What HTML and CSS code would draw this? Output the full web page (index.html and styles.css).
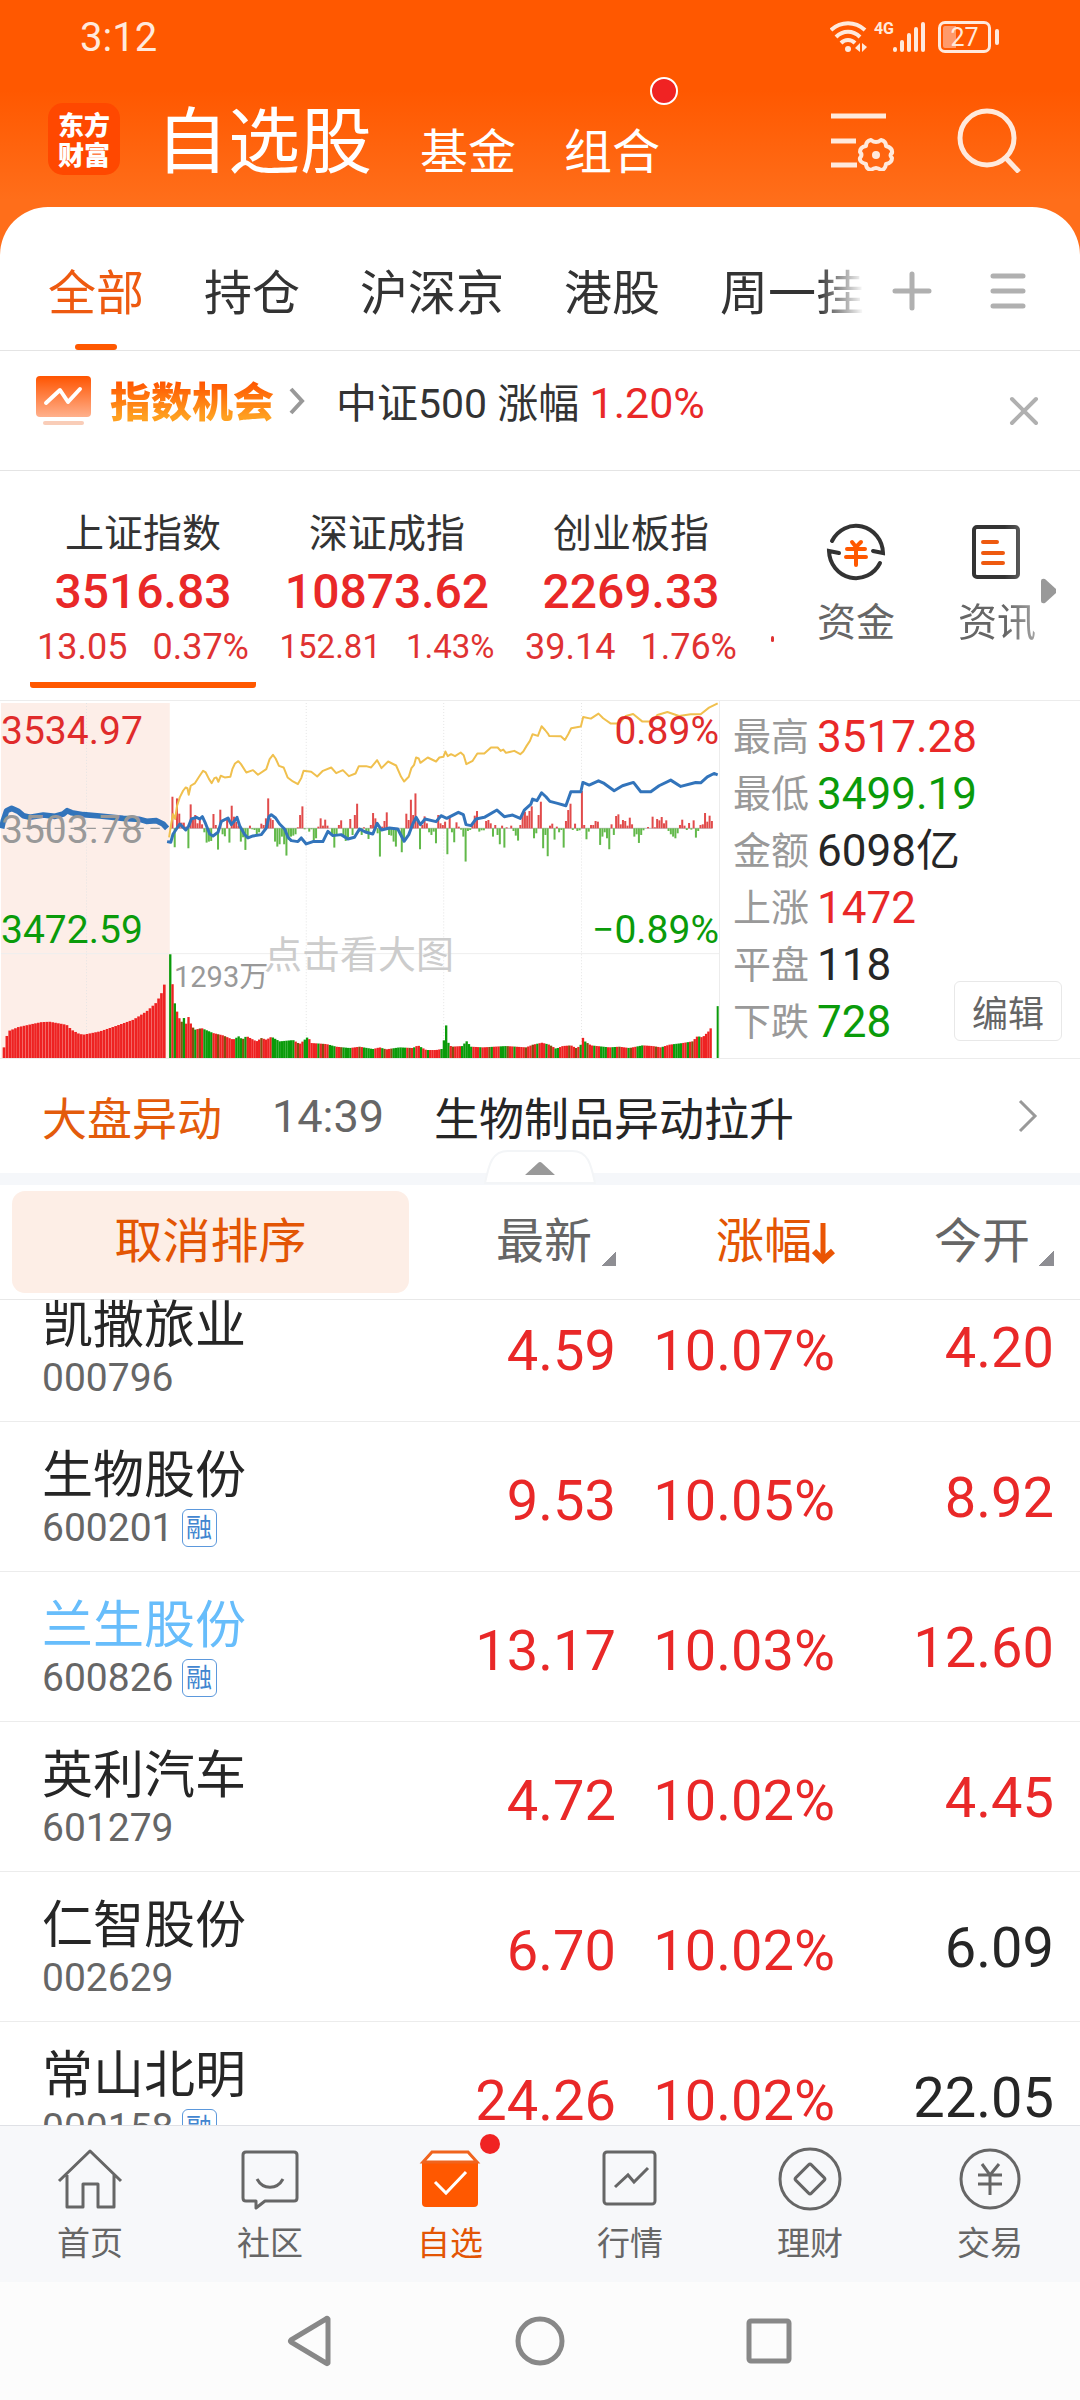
FILE: index.html
```html
<!DOCTYPE html>
<html lang="zh-CN">
<head>
    <meta charset="UTF-8" />
    <meta name="viewport" content="width=device-width, initial-scale=1.0" />
    <title>自选股</title>
    <link rel="stylesheet" href="styles.css">
</head>
<body>
<div class="app">
    <header class="header">
        <div class="status-bar">
            <span class="clock">3:12</span>
            <div class="status-icons">
                <svg width="38" height="32" viewBox="0 0 38 32" fill="none" stroke="#ffe9dc" stroke-width="4">
                    <path d="M1 9C11 0 25 0 35 9M6 16c7-7 17-7 24 0M11 22c4-4 10-4 14 0"/>
                    <circle cx="18" cy="28" r="3" fill="#ffe9dc" stroke="none"/>
                    <path d="M30 22v9l-5-4zM32 22v9l5-5z" fill="#ffe9dc" stroke="none"/>
                </svg>
                <span class="net">4G</span>
                <svg width="34" height="32" viewBox="0 0 34 32" fill="none" stroke="#ffe9dc" stroke-width="4" stroke-linecap="round">
                    <path d="M3 28v1M10 21v8M17 14v15M24 8v21M31 3v26"/>
                </svg>
                <span class="battery">27</span>
            </div>
        </div>
        <nav class="top-nav">
            <span class="logo">东方<br>财富</span>
            <a href="#" class="top-link current">自选股</a>
            <a href="#" class="top-link">基金</a>
            <a href="#" class="top-link has-dot">组合</a>
            <button class="icon-btn push" aria-label="设置">
                <svg width="66" height="62" viewBox="0 0 66 62" fill="none" stroke="#ffe9dc" stroke-width="5">
                    <path d="M0 7h55M0 32h25M0 56h26"/>
                    <path d="M40 31Q45 35 50 31Q55 32 55 37Q62 39 61 44Q58 46 61 49Q61 54 55 55Q54 61 50 61Q45 57 40 61Q35 60 35 55Q28 53 29 49Q32 46 29 43Q29 38 35 37Q35 32 40 31Z" stroke-width="4" stroke-linejoin="round"/>
                    <circle cx="45" cy="46" r="4" fill="#ffe9dc" stroke="none"/>
                </svg>
            </button>
            <button class="icon-btn" aria-label="搜索">
                <svg width="64" height="66" viewBox="0 0 64 66" fill="none" stroke="#ffe9dc" stroke-width="5">
                    <circle cx="30" cy="31" r="27"/>
                    <path d="M48 50l14 15"/>
                </svg>
            </button>
        </nav>
    </header>

    <main class="sheet">
        <div class="group-tabs">
            <div class="tab-scroll">
                <button class="tab active">全部</button>
                <button class="tab">持仓</button>
                <button class="tab">沪深京</button>
                <button class="tab">港股</button>
                <button class="tab">周一挂</button>
            </div>
            <button class="icon-btn" aria-label="添加">
                <svg width="40" height="40" viewBox="0 0 40 40" stroke="#b0b0b0" stroke-width="5" stroke-linecap="round">
                    <path d="M3 20h34M20 3v34"/>
                </svg>
            </button>
            <button class="icon-btn" aria-label="分组管理">
                <svg width="36" height="36" viewBox="0 0 36 36" stroke="#b0b0b0" stroke-width="5" stroke-linecap="round">
                    <path d="M3 3h30M3 18h30M3 33h30"/>
                </svg>
            </button>
        </div>

        <div class="banner">
            <svg width="55" height="50" viewBox="0 0 55 50">
                <defs>
                    <linearGradient id="bannerIcon" x1="0" y1="0" x2="0" y2="1">
                        <stop offset="0" stop-color="#ff5400"/>
                        <stop offset="1" stop-color="#ffb08c"/>
                    </linearGradient>
                </defs>
                <rect width="55" height="41" rx="4" fill="url(#bannerIcon)"/>
                <rect x="7" y="45" width="41" height="4" rx="2" fill="#f9cdb8"/>
                <path d="M10 27l14-13 8 12 12-13" fill="none" stroke="#fff" stroke-width="4" stroke-linecap="round" stroke-linejoin="round"/>
            </svg>
            <strong class="banner-title">指数机会</strong>
            <svg width="16" height="28" viewBox="0 0 16 28" fill="none" stroke="#999" stroke-width="4">
                <path d="M2 2l11 12L2 26"/>
            </svg>
            <p class="banner-text">中证500 涨幅 <span class="up">1.20%</span></p>
            <button class="icon-btn push" aria-label="关闭">
                <svg width="30" height="30" viewBox="0 0 30 30" stroke="#b0b0b0" stroke-width="4" stroke-linecap="round">
                    <path d="M3 3l24 24M27 3L3 27"/>
                </svg>
            </button>
        </div>

        <section class="indices">
            <div class="index-list">
                <div class="index active">
                    <h2>上证指数</h2>
                    <b>3516.83</b>
                    <p><span>13.05</span><span>0.37%</span></p>
                </div>
                <div class="index compact">
                    <h2>深证成指</h2>
                    <b>10873.62</b>
                    <p><span>152.81</span><span>1.43%</span></p>
                </div>
                <div class="index">
                    <h2>创业板指</h2>
                    <b>2269.33</b>
                    <p><span>39.14</span><span>1.76%</span></p>
                </div>
                <div class="index-more"></div>
            </div>
            <a href="#" class="shortcut">
                <svg width="60" height="64" viewBox="0 0 60 64" fill="none" stroke="#333" stroke-width="4" stroke-linecap="round">
                    <path d="M6 21A27 28 0 0 1 57 33L47 31"/>
                    <path d="M54 43A27 28 0 0 1 3 31L13 33"/>
                    <path d="M26 22l4 5 5-5M21 29h18M20 37h20M30 27v18" stroke="#ff5800"/>
                </svg>
                资金
            </a>
            <a href="#" class="shortcut fade">
                <svg width="60" height="64" viewBox="0 0 60 64" fill="none" stroke="#333" stroke-width="4" stroke-linecap="round">
                    <rect x="7" y="7" width="44" height="50" rx="3"/>
                    <path d="M16 22h14M16 33h20M16 43h20" stroke="#ee5a10"/>
                </svg>
                资讯
            </a>
            <svg class="more-arrow" width="15" height="26" viewBox="0 0 15 26" fill="#999">
                <path d="M0 3Q0 0 4 1L15 11V15L4 25Q0 26 0 23Z"/>
            </svg>
        </section>

        <section class="market">
            <div class="chart">
                <svg id="chart" class="chart-svg" viewBox="0 30 2160 1074" preserveAspectRatio="none" fill="none">
                    <rect x="3" y="36" width="507" height="1068" fill="#fdeee8"/>
                    <path d="M3 790H2160" stroke="#eee" stroke-width="3"/>
                    <path d="M260 36V1104M920 36V1104M1333 36V1104M1747 36V1104" stroke="#e4e4e4" stroke-width="3" stroke-dasharray="3 6"/>
                    <path d="M20 413H500" stroke="#999" stroke-width="4" stroke-dasharray="28 20"/>
                    <path d="M510 413H2140" stroke="#999" stroke-width="2"/>
                    <g id="bars"></g>
                    <polyline stroke="#f0c04e" stroke-width="6" stroke-linejoin="round" points="508,440 515,395 520,370 526,385 532,345 540,320 550,300 558,290 563,292 567,312 573,285 585,278 598,258 610,240 618,245 628,265 636,277 644,262 650,260 656,273 663,255 675,260 692,258 698,235 706,218 716,211 724,220 740,245 760,238 775,252 800,235 810,205 820,192 828,203 838,225 852,230 864,260 880,272 895,280 905,262 912,240 935,243 953,257 970,240 995,230 1010,247 1030,238 1048,256 1068,248 1078,226 1100,226 1115,230 1133,208 1146,232 1166,212 1190,224 1205,258 1214,272 1228,258 1236,232 1244,222 1250,200 1258,203 1263,216 1285,200 1310,212 1320,200 1332,198 1338,182 1345,196 1355,190 1367,196 1384,185 1393,193 1401,220 1420,210 1434,188 1455,188 1475,170 1495,170 1504,180 1512,176 1520,186 1545,180 1563,190 1572,182 1582,165 1592,150 1600,130 1616,135 1627,106 1638,118 1646,128 1650,135 1685,136 1697,147 1707,130 1716,112 1745,107 1752,78 1775,83 1798,68 1812,82 1835,98 1860,98 1880,75 1902,69 1930,92 1960,92 1975,72 2005,63 2040,75 2075,70 2105,70 2130,50 2156,37"/>
                    <polyline stroke="#3274bb" stroke-width="17" stroke-linejoin="round" points="5,413 10,390 20,360 35,353 55,362 70,375 90,380 130,373 165,377 190,370 202,360 215,366 250,372 300,376 370,383 420,386 440,392 470,390 490,400 502,413"/>
                    <polyline stroke="#3274bb" stroke-width="9" stroke-linejoin="round" points="502,453 513,455 520,430 530,415 540,400 550,410 558,418 566,408 575,385 590,380 600,385 608,378 618,400 630,430 640,436 655,425 665,392 685,382 695,402 705,390 712,380 720,405 735,432 745,442 760,436 785,432 800,412 808,378 815,372 828,382 840,400 855,415 865,440 875,450 895,453 905,442 920,460 940,453 970,453 985,422 1000,435 1025,432 1045,445 1065,440 1080,415 1100,425 1120,430 1133,398 1146,418 1170,412 1195,415 1214,452 1228,432 1240,400 1250,380 1263,402 1277,385 1310,393 1325,375 1342,383 1377,365 1392,372 1400,402 1415,405 1430,385 1455,380 1493,358 1515,378 1540,373 1563,383 1575,358 1595,340 1600,325 1613,330 1627,306 1640,318 1652,332 1675,338 1700,345 1715,303 1745,303 1751,275 1770,283 1798,270 1815,278 1845,300 1870,285 1903,275 1925,303 1955,303 1980,285 2015,268 2045,287 2090,275 2105,276 2125,258 2145,248 2156,252"/>
                </svg>
                <span class="mark high">3534.97</span>
                <span class="mark mid">3503.78</span>
                <span class="mark low">3472.59</span>
                <span class="mark high right">0.89%</span>
                <span class="mark low right">−0.89%</span>
                <span class="mark volume">1293万</span>
                <span class="mark hint">点击看大图</span>
            </div>
            <div class="stats">
                <dl>
                    <dt>最高</dt><dd class="up">3517.28</dd>
                    <dt>最低</dt><dd class="down">3499.19</dd>
                    <dt>金额</dt><dd>6098亿</dd>
                    <dt>上涨</dt><dd class="up">1472</dd>
                    <dt>平盘</dt><dd>118</dd>
                    <dt>下跌</dt><dd class="down">728</dd>
                </dl>
                <button class="edit-btn">编辑</button>
            </div>
        </section>

        <a href="#" class="alert">
            <span class="alert-tag">大盘异动</span>
            <time>14:39</time>
            <span class="alert-text">生物制品异动拉升</span>
            <svg class="push" width="20" height="34" viewBox="0 0 20 34" fill="none" stroke="#999" stroke-width="3">
                <path d="M2 2l15 15L2 32"/>
            </svg>
        </a>
        <div class="divider">
            <svg class="fold" width="112" height="34" viewBox="0 0 112 34">
                <path d="M1 33C5 14 8 1 24 1H88C104 1 107 14 111 33Z" fill="#fff" stroke="#f3f5f7" stroke-width="2"/>
                <path d="M41 25L54 13Q56 11 58 13L71 25Z" fill="#999"/>
            </svg>
        </div>

        <div class="list">
            <table>
                <colgroup>
                    <col><col class="c-last"><col class="c-rate"><col class="c-open">
                </colgroup>
                <thead>
                    <tr>
                        <th><button class="cancel-sort">取消排序</button></th>
                        <th><button class="sort">最新<i class="corner"></i></button></th>
                        <th><button class="sort on">涨幅<svg width="23" height="44" viewBox="0 0 23 44" fill="none" stroke="#ea5504" stroke-width="5"><path d="M11 1v36"/><path d="M2 29l9 9 10-9" stroke-width="6"/></svg></button></th>
                        <th><button class="sort">今开<i class="corner"></i></button></th>
                    </tr>
                </thead>
                <tbody>
                    <tr class="scrolled">
                        <td><div class="name">凯撒旅业</div><div class="code">000796</div></td>
                        <td class="up">4.59</td><td class="up">10.07%</td><td class="up">4.20</td>
                    </tr>
                    <tr>
                        <td><div class="name">生物股份</div><div class="code">600201<span class="badge">融</span></div></td>
                        <td class="up">9.53</td><td class="up">10.05%</td><td class="up">8.92</td>
                    </tr>
                    <tr>
                        <td><div class="name held">兰生股份</div><div class="code">600826<span class="badge">融</span></div></td>
                        <td class="up">13.17</td><td class="up">10.03%</td><td class="up">12.60</td>
                    </tr>
                    <tr>
                        <td><div class="name">英利汽车</div><div class="code">601279</div></td>
                        <td class="up">4.72</td><td class="up">10.02%</td><td class="up">4.45</td>
                    </tr>
                    <tr>
                        <td><div class="name">仁智股份</div><div class="code">002629</div></td>
                        <td class="up">6.70</td><td class="up">10.02%</td><td>6.09</td>
                    </tr>
                    <tr>
                        <td><div class="name">常山北明</div><div class="code">000158<span class="badge">融</span></div></td>
                        <td class="up">24.26</td><td class="up">10.02%</td><td>22.05</td>
                    </tr>
                </tbody>
            </table>
        </div>
    </main>

    <nav class="bottom-nav">
        <a href="#">
            <svg width="66" height="66" viewBox="0 0 66 66" fill="none" stroke="#666" stroke-width="3">
                <path d="M2 35L33 5l31 30M10 29v32h16V38h15v23h16V29" stroke-linejoin="round"/>
            </svg>
            首页
        </a>
        <a href="#">
            <svg width="66" height="66" viewBox="0 0 66 66" fill="none" stroke="#666" stroke-width="3" stroke-linejoin="round">
                <path d="M9 6h48q3 0 3 3v43q0 3-3 3H28l-9 7v-7H9q-3 0-3-3V9q0-3 3-3z"/>
                <path d="M20 33c6 11 20 11 26 0"/>
            </svg>
            社区
        </a>
        <a href="#" class="current has-dot">
            <svg width="66" height="66" viewBox="0 0 66 66" fill="none">
                <path d="M5 15h56v42q0 4-4 4H9q-4 0-4-4z" fill="#ff5800"/>
                <path d="M6 16L15 6h36l9 10z" fill="#fff" stroke="#f0641e" stroke-width="3"/>
                <path d="M18 36l11 11 20-21" stroke="#fff" stroke-width="3"/>
            </svg>
            自选
        </a>
        <a href="#">
            <svg width="66" height="66" viewBox="0 0 66 66" fill="none" stroke="#666" stroke-width="3">
                <rect x="7" y="6" width="51" height="52" rx="3"/>
                <path d="M18 41l13-12 6 7 14-14"/>
            </svg>
            行情
        </a>
        <a href="#">
            <svg width="66" height="66" viewBox="0 0 66 66" fill="none" stroke="#666" stroke-width="3">
                <circle cx="33" cy="33" r="30"/>
                <rect x="22" y="22" width="22" height="22" rx="2" transform="rotate(45 33 33)"/>
            </svg>
            理财
        </a>
        <a href="#">
            <svg width="66" height="66" viewBox="0 0 66 66" fill="none" stroke="#666" stroke-width="3">
                <circle cx="33" cy="33" r="29"/>
                <path d="M25 18l8 11 9-11M21 29h24M21 38h24M33 29v20"/>
            </svg>
            交易
        </a>
    </nav>

    <div class="system-bar">
        <button class="icon-btn" aria-label="返回">
            <svg width="50" height="54" viewBox="0 0 50 54" fill="none" stroke="#888" stroke-width="5" stroke-linejoin="round"><path d="M43 5v44q-1 1-2 0L6 28q-1-1 0-2L41 5q1-1 2 0z"/></svg>
        </button>
        <button class="icon-btn" aria-label="主页">
            <svg width="50" height="54" viewBox="0 0 50 54" fill="none" stroke="#888" stroke-width="5"><circle cx="25" cy="27" r="22"/></svg>
        </button>
        <button class="icon-btn" aria-label="最近任务">
            <svg width="50" height="54" viewBox="0 0 50 54" fill="none" stroke="#888" stroke-width="5"><rect x="4" y="7" width="40" height="40" rx="2"/></svg>
        </button>
    </div>
</div>
<script src="chart.js"></script>
</body>
</html>
```

FILE: styles.css
```css
* {
    box-sizing: border-box;
}

body {
    margin: 0;
    font-family: Roboto, "Noto Sans CJK SC", sans-serif;
    color: #262626;
    background-color: #fff;
}

h2, p, dl, dd {
    margin: 0;
    font-weight: normal;
}

a {
    color: inherit;
    text-decoration: none;
}

button {
    margin: 0;
    padding: 0;
    border: none;
    background: none;
    font: inherit;
    color: inherit;
    cursor: pointer;
}

svg {
    display: block;
    flex: none;
}

.app {
    display: flex;
    flex-direction: column;
    height: 100vh;
    overflow: hidden;
    background: linear-gradient(#ff5800 90px, #ff6e1a 200px);
}

.push {
    margin-left: auto;
}

.up {
    color: #e92828;
}

.down {
    color: #0a9b0a;
}

/* Header */
.status-bar {
    display: flex;
    justify-content: space-between;
    align-items: center;
    height: 74px;
    padding: 0 80px;
    color: #ffe9dc;
}

.clock {
    font-size: 40px;
}

.status-icons {
    display: flex;
    align-items: center;
    gap: 6px;
}

.net {
    align-self: flex-start;
    margin-right: -8px;
    font-size: 16px;
    font-weight: bold;
    line-height: 16px;
}

.battery {
    position: relative;
    width: 53px;
    height: 32px;
    margin: 0 9px 0 6px;
    padding: 2px;
    border: 3px solid #ffe9dc;
    border-radius: 7px;
    font-size: 25px;
    line-height: 23px;
    text-align: center;
    background: linear-gradient(90deg, #ff9a6b 13px, transparent 13px) content-box;
}

.battery::after {
    content: "";
    position: absolute;
    top: 5px;
    right: -11px;
    width: 4px;
    height: 16px;
    border-radius: 2px;
    background-color: #ffe9dc;
}

.top-nav {
    display: flex;
    align-items: flex-end;
    height: 133px;
    padding: 0 59px 30px 48px;
    color: #fff;
}

.logo {
    width: 72px;
    height: 72px;
    margin-bottom: 2px;
    padding-top: 6px;
    border-radius: 15px;
    background-color: #ff4800;
    font-family: "Noto Sans CJK SC", sans-serif;
    font-size: 26px;
    font-weight: 900;
    line-height: 30px;
    text-align: center;
}

.top-link {
    position: relative;
    margin-left: 48px;
    font-size: 48px;
    line-height: 48px;
}

.top-link.current {
    margin-left: 36px;
    font-size: 72px;
    line-height: 68px;
}

.top-link.has-dot::after {
    content: "";
    position: absolute;
    top: -52px;
    right: -18px;
    width: 24px;
    height: 24px;
    border: 2px solid #fff;
    border-radius: 50%;
    background-color: #f02323;
}

.top-nav .icon-btn {
    margin-bottom: 6px;
}

.top-nav .icon-btn + .icon-btn {
    margin-left: 60px;
    margin-bottom: 4px;
}

/* White sheet */
.sheet {
    display: flex;
    flex-direction: column;
    flex: 1;
    min-height: 0;
    border-radius: 48px 48px 0 0;
    background-color: #fff;
}

.group-tabs {
    display: flex;
    align-items: center;
    justify-content: space-between;
    height: 144px;
    padding: 0 54px 0 48px;
    border-bottom: 1px solid #e4e4e4;
}

.group-tabs .icon-btn {
    margin-top: 24px;
}

.tab-scroll {
    display: flex;
    gap: 60px;
    height: 100%;
    margin-right: -30px;
    -webkit-mask-image: linear-gradient(90deg, #000 770px, transparent 816px);
    mask-image: linear-gradient(90deg, #000 770px, transparent 816px);
}

.tab {
    display: flex;
    flex-direction: column;
    align-items: center;
    padding-top: 63px;
    font-size: 48px;
    line-height: 48px;
    color: #333;
}

.tab.active {
    color: #ee5a10;
}

.tab.active::after {
    content: "";
    width: 42px;
    height: 6px;
    margin-top: 26px;
    border-radius: 3px;
    background-color: #ff5800;
}

.banner {
    display: flex;
    align-items: center;
    height: 120px;
    padding: 0 41px 20px 36px;
    border-bottom: 1px solid #e4e4e4;
}

.banner-title {
    margin: 0 15px 4px 19px;
    font-size: 41px;
    font-weight: 900;
    background: linear-gradient(#ff5400 20%, #ffa020 80%);
    -webkit-background-clip: text;
    background-clip: text;
    color: transparent;
}

.banner-text {
    margin: 0 0 2px 31px;
    font-size: 41px;
    color: #333;
}

.banner-text .up {
    font-size: 43px;
}

.banner .push {
    margin-top: 20px;
}

/* Indices */
.indices {
    display: flex;
    height: 229px;
    padding: 41px 24px 0 30px;
}

.index-list {
    display: flex;
    flex: 1;
    gap: 18px;
    overflow: hidden;
}

.index {
    display: flex;
    flex-direction: column;
    align-items: center;
    width: 226px;
    flex: none;
    height: 176px;
    color: #e92828;
}

.index.active {
    border-bottom: 6px solid #ff5800;
    border-radius: 3px;
}

.index h2 {
    font-size: 39px;
    line-height: 44px;
    color: #333;
}

.index b {
    font-size: 48px;
    font-weight: 500;
    line-height: 71px;
}

.index p {
    display: flex;
    gap: 25px;
    font-size: 36px;
    line-height: 40px;
    color: #e03232;
}

.index.compact p {
    font-size: 33px;
}

/* Edge of the next index, which is scrolled out of view */
.index-more {
    width: 3px;
    height: 6px;
    margin: 124px 0 0 9px;
    flex: none;
    border-radius: 2px;
    background-color: #e03232;
}

.shortcut {
    display: flex;
    flex-direction: column;
    align-items: center;
    gap: 19px;
    margin-left: 42px;
    padding-top: 8px;
    font-size: 39px;
    line-height: 40px;
    color: #666;
}

.shortcut + .shortcut {
    margin-left: 63px;
}

.shortcut.fade {
    -webkit-mask-image: linear-gradient(90deg, #000 60%, rgba(0, 0, 0, 0.6));
    mask-image: linear-gradient(90deg, #000 60%, rgba(0, 0, 0, 0.6));
}

.more-arrow {
    margin: 66px 0 0 5px;
}

/* Chart and stats */
.market {
    display: grid;
    grid-template-columns: 2fr 1fr;
    height: 359px;
    border-top: 1px solid #ececec;
    border-bottom: 1px solid #ececec;
}

.chart {
    position: relative;
    min-width: 0;
    border-right: 1px solid #ececec;
}

.chart-svg {
    width: 100%;
    height: 357px;
}

.mark {
    position: absolute;
    left: 1px;
    font-size: 39px;
    line-height: 40px;
}

.mark.right {
    left: auto;
    right: 0;
}

.mark.high {
    top: 10px;
    color: #e02b2b;
}

.mark.mid {
    top: 109px;
    color: #999;
}

.mark.low {
    top: 209px;
    color: #0a9b0a;
}

.mark.volume {
    top: 256px;
    left: 174px;
    font-size: 29px;
    color: #999;
}

.mark.hint {
    top: 234px;
    left: 264px;
    font-size: 38px;
    color: #ccc;
}

.stats {
    position: relative;
    padding: 8px 0 0 13px;
}

.stats dl {
    display: grid;
    grid-template-columns: 84px 1fr;
    line-height: 57px;
}

.stats dt {
    font-size: 38px;
    color: #999;
}

.stats dd {
    font-size: 44px;
}

.edit-btn {
    position: absolute;
    right: 18px;
    bottom: 17px;
    width: 108px;
    height: 60px;
    border: 1px solid #e8e8e8;
    border-radius: 6px;
    background-color: #fff;
    font-size: 36px;
    color: #666;
}

/* Market alert */
.alert {
    display: flex;
    align-items: center;
    height: 114px;
    padding: 0 42px;
    font-size: 45px;
}

.alert-tag {
    color: #e35b0b;
}

.alert time {
    margin: 0 50px;
    color: #666;
}

.divider {
    position: relative;
    height: 12px;
    background-color: #f5f7fa;
}

.fold {
    position: absolute;
    left: 50%;
    bottom: 1px;
    transform: translateX(-50%);
}

/* Stock list */
.list {
    flex: 1;
    min-height: 0;
    overflow: hidden;
}

table {
    width: 100%;
    table-layout: fixed;
    border-collapse: separate;
    border-spacing: 0;
}

.c-last {
    width: 200px;
}

.c-rate {
    width: 219px;
}

.c-open {
    width: 245px;
}

th {
    height: 115px;
    padding: 0;
    border-bottom: 1px solid #e8e8e8;
    font-size: 48px;
    font-weight: normal;
    line-height: 48px;
    color: #666;
}

th:first-child {
    padding: 0 7px 0 12px;
}

.cancel-sort {
    width: 100%;
    height: 102px;
    border-radius: 13px;
    background-color: #fdeee6;
    color: #e35504;
}

.sort {
    display: flex;
    align-items: flex-end;
    margin-left: auto;
}

.sort.on {
    color: #e35504;
}

.corner {
    width: 15px;
    height: 15px;
    margin-left: 9px;
    background: linear-gradient(135deg, transparent 50%, #8e8e93 50%);
}

th:last-child,
td:last-child {
    padding-right: 26px;
}

td {
    height: 150px;
    padding: 51px 0 0;
    border-bottom: 1px solid #ececec;
    font-size: 56px;
    line-height: 56px;
    text-align: right;
    vertical-align: top;
}

td:last-child {
    padding-top: 48px;
}

td:first-child {
    padding: 30px 0 0 42px;
    text-align: left;
}

/* First row sits partly under the header */
.scrolled td {
    height: 122px;
    padding-top: 23px;
}

.scrolled td:last-child {
    padding-top: 20px;
}

.scrolled td:first-child {
    padding-top: 2px;
}

.name {
    font-size: 51px;
    line-height: 48px;
}

.name.held {
    color: #67bdfb;
}

.code {
    display: flex;
    align-items: center;
    gap: 8px;
    margin-top: 8px;
    font-size: 39px;
    line-height: 40px;
    color: #666;
}

.badge {
    width: 35px;
    height: 38px;
    border: 1px solid #5b98dc;
    border-radius: 6px;
    font-size: 26px;
    line-height: 36px;
    text-align: center;
    color: #4286d0;
}

/* Bottom navigation */
.bottom-nav {
    display: grid;
    grid-template-columns: repeat(6, 1fr);
    height: 157px;
    border-top: 1px solid #dfe1e6;
    background-color: #f7f8fa;
    font-size: 33px;
    line-height: 36px;
    color: #666;
}

.bottom-nav a {
    position: relative;
    display: flex;
    flex-direction: column;
    align-items: center;
    gap: 14px;
    padding-top: 20px;
}

.bottom-nav .current {
    color: #e35504;
}

.bottom-nav .has-dot::after {
    content: "";
    position: absolute;
    top: 8px;
    left: 120px;
    width: 20px;
    height: 20px;
    border-radius: 50%;
    background-color: #f02323;
}

.system-bar {
    display: flex;
    justify-content: center;
    align-items: center;
    gap: 180px;
    height: 118px;
    background-color: #fcfcfc;
}
```

FILE: chart.js
```js
const bars = document.getElementById('bars');

function addBar(x, y, width, height, color) {
    const rect = document.createElementNS('http://www.w3.org/2000/svg', 'rect');
    rect.setAttribute('x', x);
    rect.setAttribute('y', y);
    rect.setAttribute('width', width);
    rect.setAttribute('height', height);
    rect.setAttribute('fill', color);
    bars.appendChild(rect);
}

// Buy/sell strength per minute, above and below the previous close
const strength = [
    [518, [95, -57, 90, 44, 17, 17, 5, -60, 72, 25, 40, 15, 28, 12, -12, -43, -40, -38, 43, 10, -64, 56, -18, -24, 30,
        -43, 68, 35, 20, 8, -40, -27, -65, -30, 8, -3, -5, -20, -12, 14, 10, 30, 90, 30, 25, -40, -55, -48, -25, -48,
        -82, -35, -25, -22, -18, 3, 40, 66, -3, 0, -10, -3, -38, -30, 5, 30, 8, 26, 8, 0, -18, -58, -20, 10, 24, -25,
        -38, -28, 28, -20, 40, 74, -10, -20, 3, -12, -32, 10, 46, 30, -15, -85, 5, 22, 48, -20, -22, -40, -55]],
    [1207, [-72, -40, 44, 25, 86, 40, 105, 25, -63, 10, 36, 15, -12, -20, -10, -45, 40, 15, 10, 20, -78, 35, -12, -42,
        18, 5, -4, -25, -100, -8, -5, 15, 38, 52, -10, -6, -6, 22, 25, 15, -25, 10, -20, -48, 8, -58, 3, 0, 8, -8, -22,
        -37, 10, 45, 50, 38, 52, 66, -30, -15, 40, 80, -60, -20, -84, 8, 14, -34, 5, -12, -5, -58, 22, 55, 74, -5, 14,
        -8, -6, 112, 10, -33, -10, 10, 10, 22, 20, -50, -25, -12, -30, -63, 12, -20, 37, 42, 12, 25, 22, 8, 32, 12, -25,
        -18, -44, -20, -6, 0, 4, 0, 35, 3, 28, 24, 34, 15, 24, -8, -18, -25, -30, -15, 10, 26, 8, -5, 16, -4, 24, -28,
        -8, 10, 12, 46, 20, 38, 22]]
];

strength.forEach(([start, values]) => {
    values.forEach((value, i) => {
        const x = start - 3 + i * 6.85;
        if (value > 0) {
            addBar(x, 413 - value, 6, value, '#e14b4b');
        } else if (value < 0) {
            addBar(x, 413, 6, -value, '#62b94a');
        }
    });
});

// Volume outline as [x, height], filled in with one bar per minute
function heightAt(points, x) {
    const i = points.findIndex((point) => point[0] >= x);
    if (i < 1) {
        return points[i < 0 ? points.length - 1 : 0][1];
    }
    const [x0, h0] = points[i - 1];
    const [x1, h1] = points[i];
    return h0 + (h1 - h0) * (x - x0) / (x1 - x0);
}

const auction = [[12, 32], [20, 65], [28, 82], [55, 93], [100, 103], [125, 108], [150, 109], [200, 100], [215, 85],
    [235, 74], [250, 70], [300, 80], [350, 97], [400, 115], [440, 140], [470, 167], [485, 195], [500, 240]];
for (let x = 12; x <= 502; x += 8.6) {
    addBar(x - 4, 1104 - heightAt(auction, x), 8, heightAt(auction, x), '#ee2222');
}

const volume = [[511, 312], [518, 220], [525, 162], [532, 138], [539, 118], [546, 108], [553, 122], [560, 100],
    [567, 128], [574, 98], [585, 85], [605, 90], [640, 75], [670, 68], [700, 55], [718, 66], [727, 55], [740, 66],
    [770, 50], [785, 60], [800, 55], [815, 64], [840, 50], [880, 54], [900, 42], [925, 64], [935, 45], [980, 42],
    [1010, 34], [1050, 30], [1080, 34], [1120, 27], [1140, 32], [1160, 26], [1200, 32], [1240, 30], [1255, 38],
    [1280, 24], [1310, 24], [1331, 28], [1338, 116], [1345, 48], [1355, 34], [1390, 36], [1400, 52], [1415, 34],
    [1450, 32], [1520, 36], [1580, 32], [1600, 40], [1628, 46], [1650, 40], [1670, 28], [1690, 36], [1715, 38],
    [1730, 30], [1743, 36], [1750, 62], [1757, 50], [1775, 38], [1830, 32], [1860, 34], [1890, 30], [1930, 38],
    [1960, 36], [1985, 32], [2010, 40], [2050, 45], [2080, 50], [2095, 66], [2110, 62], [2130, 82], [2138, 95]];
const falling = [[506, 513], [523, 529], [549, 556], [582, 588], [594, 598], [610, 640], [655, 660], [708, 730],
    [736, 742], [818, 884], [912, 928], [955, 960], [990, 1010], [1030, 1055], [1088, 1122], [1145, 1150],
    [1180, 1222], [1240, 1250], [1262, 1266], [1285, 1290], [1320, 1328], [1332, 1350], [1382, 1416], [1440, 1446],
    [1475, 1482], [1500, 1520], [1545, 1552], [1608, 1614], [1640, 1648], [1664, 1682], [1740, 1746], [1755, 1760],
    [1780, 1786], [1804, 1826], [1836, 1852], [1886, 1892], [1915, 1935], [1950, 1956], [1990, 1996], [2020, 2050],
    [2065, 2070], [2094, 2104], [2128, 2132]];
for (let x = 511; x <= 2140; x += 6.85) {
    const down = falling.some(([from, to]) => x >= from && x <= to);
    const mixed = !down && Math.round(x) % 5 === 0;
    const color = down ? '#0a9b0a' : mixed ? '#84500f' : '#ee2222';
    addBar(x - 3, 1104 - heightAt(volume, x), 7, heightAt(volume, x), color);
}
addBar(2153, 948, 6, 156, '#0a9b0a');
```
